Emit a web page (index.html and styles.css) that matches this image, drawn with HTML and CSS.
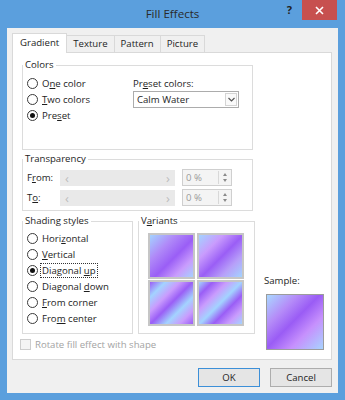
FILE: index.html
```html
<!DOCTYPE html>
<html lang="en">
<head>
    <meta charset="UTF-8">
    <title>Fill Effects</title>
    <link rel="stylesheet" href="styles.css">
</head>
<body>
<div class="window">
    <div class="titlebar">
        <span></span>
        <span class="title">Fill Effects</span>
        <div class="controls">
            <span class="help">?</span>
            <span class="close">
                <svg width="9" height="9" viewBox="0 0 9 9"><path d="M1 1L8 8M8 1L1 8" stroke="#fff" stroke-width="1.6"/></svg>
            </span>
        </div>
    </div>
    <div class="client">
        <div class="tabs">
            <div class="tab active">Gradient</div>
            <div class="tab">Texture</div>
            <div class="tab">Pattern</div>
            <div class="tab">Picture</div>
        </div>
        <div class="panel">
            <fieldset class="group colors">
                <legend>Colors</legend>
                <div class="colors-body">
                    <div class="radio-list">
                        <div class="radio"><i class="dot"></i><span>O<u>n</u>e color</span></div>
                        <div class="radio"><i class="dot"></i><span><u>T</u>wo colors</span></div>
                        <div class="radio"><i class="dot on"></i><span>Pre<u>s</u>et</span></div>
                    </div>
                    <div class="preset">
                        <div class="preset-label">Pr<u>e</u>set colors:</div>
                        <div class="select">
                            <span class="select-text">Calm Water</span>
                            <span class="select-btn">
                                <svg width="7" height="5" viewBox="0 0 7 5"><path d="M0.5 1L3.5 4L6.5 1" fill="none" stroke="#555" stroke-width="1.2"/></svg>
                            </span>
                        </div>
                    </div>
                </div>
            </fieldset>

            <fieldset class="group transparency">
                <legend>Transparency</legend>
                <div class="transparency-body">
                    <div class="t-row">
                        <span class="t-label">F<u>r</u>om:</span>
                        <div class="slider"><span>&lsaquo;</span><span>&rsaquo;</span></div>
                        <div class="spin">
                            <span class="spin-text">0 %</span>
                            <span class="spin-btn"><i class="up"></i><i class="down"></i></span>
                        </div>
                    </div>
                    <div class="t-row">
                        <span class="t-label">T<u>o</u>:</span>
                        <div class="slider"><span>&lsaquo;</span><span>&rsaquo;</span></div>
                        <div class="spin">
                            <span class="spin-text">0 %</span>
                            <span class="spin-btn"><i class="up"></i><i class="down"></i></span>
                        </div>
                    </div>
                </div>
            </fieldset>

            <div class="lower">
                <fieldset class="group shading">
                    <legend>Shading styles</legend>
                    <div class="shading-body">
                        <div class="radio"><i class="dot"></i><span>Hori<u>z</u>ontal</span></div>
                        <div class="radio"><i class="dot"></i><span><u>V</u>ertical</span></div>
                        <div class="radio"><i class="dot on"></i><span class="focus">Diagonal <u>u</u>p</span></div>
                        <div class="radio"><i class="dot"></i><span>Diagonal <u>d</u>own</span></div>
                        <div class="radio"><i class="dot"></i><span><u>F</u>rom corner</span></div>
                        <div class="radio"><i class="dot"></i><span>Fro<u>m</u> center</span></div>
                    </div>
                </fieldset>

                <fieldset class="group variants">
                    <legend>V<u>a</u>riants</legend>
                    <div class="tiles">
                        <div class="tile tile-1"></div>
                        <div class="tile tile-2"></div>
                        <div class="tile tile-3"></div>
                        <div class="tile tile-4"></div>
                    </div>
                </fieldset>

                <div class="sample">
                    <div class="sample-label">Sample:</div>
                    <div class="sample-box"></div>
                </div>

                <div class="check">
                    <i class="box"></i>
                    <span>Rotate fill effect with shape</span>
                </div>
            </div>
        </div>
        <div class="buttons">
            <div class="btn btn-default">OK</div>
            <div class="btn">Cancel</div>
        </div>
    </div>
</div>
</body>
</html>
```

FILE: styles.css
```css
* {
    box-sizing: border-box;
}
body {
    margin: 0;
    font-family: "Open Sans", "Noto Sans", sans-serif;
    font-size: 9.6px;
    color: #1e1e1e;
}
u {
    text-decoration: underline;
    text-underline-offset: 1px;
}

/* window frame */
.window {
    width: 345px;
    height: 400px;
    background-color: #5b9fdd;
    display: flex;
    flex-direction: column;
}
.titlebar {
    height: 28px;
    display: grid;
    grid-template-columns: 1fr auto 1fr;
}
.title {
    font-size: 11.6px;
    line-height: 28px;
    color: #2a2a2a;
}
.controls {
    justify-self: end;
    display: flex;
    align-items: flex-start;
    margin-right: 8px;
}
.help {
    font-size: 11px;
    font-weight: bold;
    line-height: 20px;
    color: #222;
    margin-right: 10px;
}
.close {
    width: 35px;
    height: 20px;
    background-color: #c7504f;
    display: flex;
    align-items: center;
    justify-content: center;
}

.client {
    flex: 1;
    margin: 0 7px 7px;
    background-color: #f0f0f0;
    padding: 5px 6px 6px 5px;
    display: flex;
    flex-direction: column;
}

/* tabs */
.tabs {
    display: flex;
    align-items: flex-end;
    height: 19px;
    position: relative;
    z-index: 1;
}
.tab {
    height: 17px;
    line-height: 16px;
    padding: 0 6px;
    border: 1px solid #d9d9d9;
    border-bottom: none;
    background-color: #f0f0f0;
    margin-left: -1px;
}
.tab.active {
    height: 20px;
    margin-bottom: -1px;
    margin-left: 0;
    padding: 0 7px;
    line-height: 18px;
    background-color: #fff;
}

.panel {
    height: 308px;
    background-color: #fff;
    border: 1px solid #d9d9d9;
    padding: 6px 8px 0 9px;
}

/* group boxes */
.group {
    margin: 0;
    padding: 0;
    border: 1px solid #dcdcdc;
    min-width: 0;
}
.group legend {
    padding: 0 2px;
    margin-left: 0;
    line-height: 12px;
}

.radio {
    display: flex;
    align-items: center;
    height: 16px;
    gap: 4px;
}
.dot {
    width: 11px;
    height: 11px;
    border-radius: 50%;
    border: 1px solid #3a3a3a;
    background-color: #fff;
    display: flex;
    align-items: center;
    justify-content: center;
    flex: none;
}
.dot.on::after {
    content: '';
    width: 5px;
    height: 5px;
    border-radius: 50%;
    background-color: #111;
}

.colors {
    width: 231px;
}
.colors-body {
    height: 78px;
    padding: 4px 0 0 4px;
    display: grid;
    grid-template-columns: 106px 1fr;
}
.preset {
    padding-top: 2px;
}
.preset-label {
    line-height: 14px;
}
.select {
    width: 106px;
    height: 17px;
    border: 1px solid #acacac;
    display: flex;
    align-items: center;
    justify-content: space-between;
    padding: 1px 1px 1px 3px;
}
.select-btn {
    width: 12px;
    height: 13px;
    border: 1px solid #d4d4d4;
    background-color: #fafafa;
    display: flex;
    align-items: center;
    justify-content: center;
}

.transparency {
    width: 231px;
    margin-top: 3px;
}
.transparency-body {
    padding: 4px 0 4px 4px;
    display: flex;
    flex-direction: column;
    gap: 3px;
}
.t-row {
    display: flex;
    align-items: center;
    height: 17px;
}
.t-label {
    width: 33px;
}
.slider {
    width: 115px;
    height: 16px;
    background-color: #e9e9e9;
    display: flex;
    justify-content: space-between;
    align-items: center;
    padding: 0 5px;
    color: #bdbdbd;
    font-size: 13px;
    line-height: 16px;
}
.spin {
    width: 50px;
    height: 17px;
    margin-left: 7px;
    border: 1px solid #cfcfcf;
    background-color: #f4f4f4;
    display: flex;
    justify-content: space-between;
    align-items: center;
    padding: 1px 1px 1px 3px;
}
.spin-text {
    color: #9a9a9a;
}
.spin-btn {
    width: 12px;
    height: 13px;
    border-left: 1px solid #d8d8d8;
    display: flex;
    flex-direction: column;
    align-items: center;
    justify-content: space-evenly;
}
.spin-btn .up,
.spin-btn .down {
    width: 0;
    height: 0;
    border-left: 2px solid transparent;
    border-right: 2px solid transparent;
}
.spin-btn .up {
    border-bottom: 3px solid #8a8a8a;
}
.spin-btn .down {
    border-top: 3px solid #8a8a8a;
}

/* shading + variants */
.lower {
    margin-top: 4px;
    display: grid;
    grid-template-columns: 111px 117px 1fr;
    grid-template-rows: auto auto;
    column-gap: 5px;
}
.shading-body {
    padding: 3px 0 7px 4px;
}
.focus {
    outline: 1px dotted #333;
    outline-offset: 0;
    padding: 0 1px;
    margin-left: -1px;
}
.tiles {
    padding: 6px 0 0 9px;
    display: grid;
    grid-template-columns: 47px 47px;
    grid-template-rows: 46px 46px;
    column-gap: 2px;
    row-gap: 1px;
}
.tile {
    border: 2px solid #c6c6c6;
}
.tile-1 {
    background-image: linear-gradient(135deg, #a3d3ff 0%, #b08af8 30%, #9a5ef6 55%, #c99cfd 78%, #a6d0ff 100%);
}
.tile-2 {
    background-image: linear-gradient(135deg, #a3d3ff 0%, #c99cfd 28%, #9a5ef6 52%, #b79ff9 75%, #a3d3ff 100%);
}
.tile-3 {
    background-image: linear-gradient(135deg, #9a5ef6 0%, #a3d3ff 18%, #c99cfd 35%, #9a5ef6 50%, #a3d3ff 68%, #c99cfd 84%, #9a5ef6 100%);
}
.tile-4 {
    background-image: linear-gradient(135deg, #a3d3ff 0%, #9a5ef6 16%, #c99cfd 33%, #a3d3ff 50%, #9a5ef6 66%, #c99cfd 83%, #a3d3ff 100%);
}

.sample {
    grid-column: 3;
    grid-row: 1 / span 2;
    align-self: end;
    padding-left: 4px;
}
.sample-label {
    line-height: 14px;
    margin-bottom: 6px;
}
.sample-box {
    width: 58px;
    height: 56px;
    margin-left: 2px;
    border: 1px solid #9c9c9c;
    background-image: linear-gradient(135deg, #a9d8ff 0%, #b58cf8 28%, #9a5cf5 48%, #c690fd 70%, #a8d4ff 100%);
}

.check {
    grid-column: 1 / span 2;
    grid-row: 2;
    margin: 5px 0 0 -2px;
    display: flex;
    align-items: center;
    gap: 4px;
    height: 11px;
    color: #a3a3a3;
}
.check .box {
    width: 11px;
    height: 11px;
    border: 1px solid #cdcdcd;
    background-color: #f4f4f4;
}

/* dialog buttons */
.buttons {
    margin-top: 8px;
    display: flex;
    justify-content: flex-end;
    gap: 10px;
}
.btn {
    width: 62px;
    height: 19px;
    line-height: 17px;
    text-align: center;
    border: 1px solid #adadad;
    background-color: #e5e5e5;
}
.btn-default {
    border-color: #3c8fd8;
}
```
